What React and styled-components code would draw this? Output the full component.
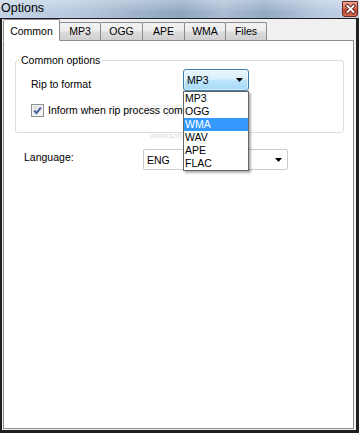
import React from "react";
import styled, { createGlobalStyle } from "styled-components";

const GlobalStyle = createGlobalStyle`
  html, body {
    margin: 0;
    padding: 0;
    background: #ffffff;
  }
  body {
    font-family: "Liberation Sans", Arial, sans-serif;
    font-size: 10.5px;
    color: #000;
  }
  * {
    box-sizing: border-box;
  }
`;

const tabs = [
  { label: "Common", w: 57 },
  { label: "MP3", w: 42 },
  { label: "OGG", w: 43 },
  { label: "APE", w: 43 },
  { label: "WMA", w: 42 },
  { label: "Files", w: 42 },
];

const formats = ["MP3", "OGG", "WMA", "WAV", "APE", "FLAC"];

function Arrow() {
  return (
    <svg width="7" height="4" viewBox="0 0 7 4">
      <polygon points="0,0 7,0 3.5,4" fill="#000" />
    </svg>
  );
}

function App() {
  return (
    <Window>
      <GlobalStyle />
      <TitleBar>
        <Title>Options</Title>
        <CloseButton>
          <svg width="13" height="12" viewBox="0 0 13 12">
            <path d="M3.5 3 L9.5 9 M9.5 3 L3.5 9" stroke="#5b2419" strokeWidth="3.6" strokeLinecap="square" />
            <path d="M3.5 3 L9.5 9 M9.5 3 L3.5 9" stroke="#ffffff" strokeWidth="1.8" strokeLinecap="square" />
          </svg>
        </CloseButton>
      </TitleBar>
      <Frame>
        <TabStrip>
          {tabs.map((t, i) => (
            <Tab key={t.label} $w={t.w} $active={i === 0} $first={i === 0}>
              {t.label}
            </Tab>
          ))}
        </TabStrip>
        <Page>
          <Watermark>
            SOFTPEDIA<sup>™</sup>
            <small>www.softpedia.com</small>
          </Watermark>
          <Group>
            <Legend>Common options</Legend>
            <GroupBody>
              <FormatRow>
                <Label $w={152} $top={9}>Rip to format</Label>
                <ComboWrap>
                  <Combo $w={66} $h={22} $focused>
                    <span>MP3</span>
                    <Arrow />
                  </Combo>
                  <DropList>
                    {formats.map((f) => (
                      <DropItem key={f} $selected={f === "WMA"}>
                        {f}
                      </DropItem>
                    ))}
                  </DropList>
                </ComboWrap>
              </FormatRow>
              <CheckRow>
                <CheckBox>
                  <svg width="9" height="9" viewBox="0 0 9 9">
                    <path d="M1.2 4.6 L3.5 7 L7.8 1.6" fill="none" stroke="#3f5a9e" strokeWidth="1.9" />
                  </svg>
                </CheckBox>
                <span>Inform when rip process completes</span>
              </CheckRow>
            </GroupBody>
          </Group>
          <LanguageRow>
            <Label $w={119} $top={2}>Language:</Label>
            <Combo $w={145} $h={21}>
              <span>ENG</span>
              <Arrow />
            </Combo>
          </LanguageRow>
        </Page>
      </Frame>
    </Window>
  );
}

const Window = styled.div`
  width: 359px;
  height: 433px;
  display: flex;
  flex-direction: column;
  overflow: hidden;
`;

const TitleBar = styled.div`
  height: 18px;
  flex: none;
  display: flex;
  justify-content: space-between;
  align-items: flex-start;
  background: linear-gradient(180deg, rgba(255, 255, 255, 0.3), rgba(255, 255, 255, 0) 70%),
    linear-gradient(90deg, #c3d3e5 0%, #b6c8dd 22%, #9cb1ca 40%, #8ea5c0 50%, #a9bdd4 62%, #93a9c4 74%, #b5c8de 88%, #c5d4e6 100%);
`;

const Title = styled.div`
  font-size: 12.5px;
  line-height: 16px;
  padding: 0 0 0 1px;
  color: #000;
`;

const CloseButton = styled.div`
  width: 16px;
  height: 16px;
  margin: 1px 1px 0 0;
  display: flex;
  align-items: center;
  justify-content: center;
  border: 1px solid #6b2a20;
  border-radius: 0 0 3px 3px;
  background: linear-gradient(180deg, #e9a593 0%, #d66a55 45%, #c4432c 55%, #d36b4f 100%);
`;

const Frame = styled.div`
  flex: 1;
  display: flex;
  flex-direction: column;
  border-style: solid;
  border-color: #1e1e1e;
  border-width: 1px 3px 3px 2px;
  background: #f0f0f0;
  padding: 0 2px 1px 1px;
  min-height: 0;
`;

const TabStrip = styled.div`
  height: 21px;
  flex: none;
  display: flex;
  align-items: flex-end;
  position: relative;
  z-index: 1;
`;

const Tab = styled.div`
  width: ${(p) => p.$w}px;
  height: ${(p) => (p.$active ? 22 : 18)}px;
  margin-left: ${(p) => (p.$first ? 0 : -1)}px;
  margin-bottom: ${(p) => (p.$active ? -1 : 0)}px;
  padding-top: ${(p) => (p.$active ? 5 : 2)}px;
  border: 1px solid #898c95;
  border-bottom: ${(p) => (p.$active ? "1px solid #ffffff" : "none")};
  border-radius: 2px 2px 0 0;
  background: ${(p) =>
    p.$active ? "#ffffff" : "linear-gradient(180deg, #f3f3f3 0%, #ebebeb 48%, #dddddd 52%, #cfcfcf 100%)"};
  display: flex;
  justify-content: center;
  align-items: flex-start;
  line-height: 13px;
  font-size: 10.5px;
`;

const Page = styled.div`
  flex: 1;
  position: relative;
  background: #ffffff;
  border: 1px solid #898c95;
  padding: 13px 9px 0 11px;
  display: flex;
  flex-direction: column;
`;

const Watermark = styled.div`
  position: absolute;
  left: 124px;
  top: 57px;
  font-family: "Liberation Serif", serif;
  font-size: 17px;
  letter-spacing: 1px;
  color: #ebebeb;
  line-height: 17px;
  pointer-events: none;
  sup {
    font-size: 7px;
    font-family: "Liberation Sans", sans-serif;
  }
  small {
    display: block;
    margin: 8px 0 0 22px;
    font-size: 8px;
    letter-spacing: 0;
    font-family: "Liberation Sans", sans-serif;
    color: #dcdcdc;
  }
`;

const Group = styled.fieldset`
  position: relative;
  margin: 0;
  padding: 0;
  min-width: 0;
  border: 1px solid #d5dfe5;
  border-radius: 3px;
`;

const Legend = styled.legend`
  margin-left: 3px;
  padding: 0 2px;
  line-height: 13px;
  font-size: 10.5px;
`;

const GroupBody = styled.div`
  padding: 2px 0 15px 15px;
`;

const FormatRow = styled.div`
  display: flex;
  align-items: flex-start;
`;

const Label = styled.div`
  width: ${(p) => p.$w}px;
  margin-top: ${(p) => p.$top}px;
  line-height: 13px;
  flex: none;
`;

const ComboWrap = styled.div`
  position: relative;
  z-index: 2;
`;

const Combo = styled.div`
  width: ${(p) => p.$w}px;
  height: ${(p) => p.$h}px;
  display: flex;
  align-items: center;
  justify-content: space-between;
  padding: 0 ${(p) => (p.$focused ? 5 : 5)}px 0 3px;
  line-height: 13px;
  border: 1px solid ${(p) => (p.$focused ? "#3c7fb1" : "#cbcbcb")};
  border-radius: ${(p) => (p.$focused ? 3 : 2)}px;
  background: ${(p) =>
    p.$focused
      ? "linear-gradient(180deg, #eaf6fd 0%, #d9f0fc 45%, #bee6fd 50%, #a7d9f5 100%)"
      : "#ffffff"};
  box-shadow: ${(p) => (p.$focused ? "inset 0 0 0 1px rgba(255,255,255,0.5)" : "none")};
  span {
    padding-top: 1px;
  }
`;

const DropList = styled.div`
  position: absolute;
  top: 100%;
  left: 0;
  width: 66px;
  background: #ffffff;
  border: 1px solid #646464;
  box-shadow: 2px 2px 2px rgba(0, 0, 0, 0.3);
`;

const DropItem = styled.div`
  height: 13px;
  line-height: 13px;
  padding-left: 1px;
  background: ${(p) => (p.$selected ? "#3399ff" : "transparent")};
  color: ${(p) => (p.$selected ? "#ffffff" : "#000000")};
`;

const CheckRow = styled.div`
  display: flex;
  align-items: center;
  gap: 4px;
  margin-top: 13px;
  line-height: 13px;
  white-space: nowrap;
`;

const CheckBox = styled.div`
  width: 13px;
  height: 13px;
  flex: none;
  display: flex;
  align-items: center;
  justify-content: center;
  border: 1px solid #8e8f8f;
  background: linear-gradient(135deg, #dcdcdc 0%, #f6f6f6 100%);
  box-shadow: inset 0 0 0 1px #f4f4f4;
`;

const LanguageRow = styled.div`
  display: flex;
  align-items: flex-start;
  margin-top: 16px;
  padding-left: 9px;
`;

export default App;
